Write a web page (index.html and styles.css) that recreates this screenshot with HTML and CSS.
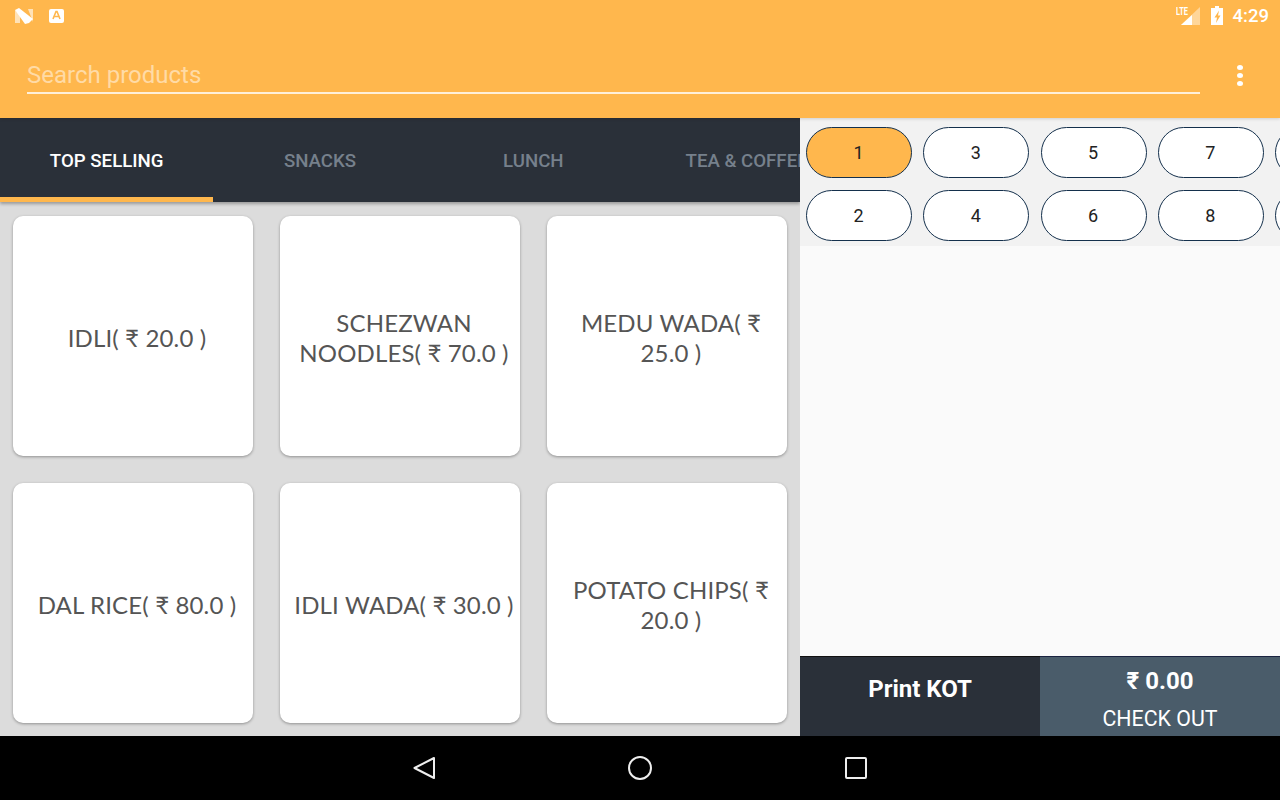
FILE: index.html
```html
<!DOCTYPE html>
<html>
	<head>
		<meta charset="UTF-8">
		<title>Point of sale</title>
		<link rel="stylesheet" href="styles.css">
	</head>
	<body>
		<div class="app">
			<div class="toolbar">
				<div class="status">
					<svg class="ic-n" width="20" height="16" viewBox="0 0 20 16">
						<path d="M1 2 L1 15 L6 15 L6 7 Z" fill="#ffe2b8"/>
						<path d="M14 1 L19 1 L19 14 Z" fill="#ffe2b8"/>
						<path d="M1 2 L5 0 L19 11 L15 15 L11 16 Z" fill="#fff"/>
					</svg>
					<svg class="ic-a" width="15" height="16" viewBox="0 0 15 16">
						<rect x="0" y="1" width="15" height="14" rx="2" fill="#fff"/>
						<path d="M4 11 L7 3.5 L8 3.5 L11 11 M5 8.5 L10 8.5" fill="none" stroke="#ffb74d" stroke-width="1.6"/>
					</svg>
					<div class="status-right">
						<svg width="24" height="20" viewBox="0 0 24 20">
							<text x="0" y="9" class="lte" textLength="12" lengthAdjust="spacingAndGlyphs">LTE</text>
							<path d="M5 19 L24 1 L24 19 Z" fill="#ffd699"/>
							<path d="M5 19 L16 9 L16 19 Z" fill="#fff"/>
						</svg>
						<svg class="ic-batt" width="14" height="20" viewBox="0 0 14 20">
							<path d="M5 0 H9 V2 H13 V19 H1 V2 H5 Z" fill="#fff"/>
							<path d="M9 4.5 L4.5 11.5 H7 L6 17 L10.5 9.5 H8 Z" fill="#ffb74d"/>
						</svg>
						<span class="clock">4:29</span>
					</div>
				</div>
				<div class="search-row">
					<div class="search">Search products</div>
					<div class="kebab"><i></i><i></i><i></i></div>
				</div>
			</div>

			<div class="main">
				<div class="left">
					<ul class="tabs">
						<li class="active">TOP SELLING</li>
						<li>SNACKS</li>
						<li>LUNCH</li>
						<li>TEA &amp; COFFEE</li>
					</ul>
					<div class="products">
						<div class="card">IDLI( ₹ 20.0 )</div>
						<div class="card">SCHEZWAN NOODLES( ₹ 70.0 )</div>
						<div class="card">MEDU WADA( ₹ 25.0 )</div>
						<div class="card">DAL RICE( ₹ 80.0 )</div>
						<div class="card">IDLI WADA( ₹ 30.0 )</div>
						<div class="card">POTATO CHIPS( ₹ 20.0 )</div>
					</div>
				</div>

				<div class="right">
					<div class="tables">
						<div class="pill on">1</div>
						<div class="pill">2</div>
						<div class="pill">3</div>
						<div class="pill">4</div>
						<div class="pill">5</div>
						<div class="pill">6</div>
						<div class="pill">7</div>
						<div class="pill">8</div>
						<div class="pill"></div>
						<div class="pill"></div>
					</div>
					<div class="cart"></div>
					<div class="actions">
						<div class="kot">Print KOT</div>
						<div class="checkout">
							<div class="total">₹ 0.00</div>
							<div class="co-label">CHECK OUT</div>
						</div>
					</div>
				</div>
			</div>

			<div class="navbar">
				<svg width="24" height="24" viewBox="0 0 24 24"><path d="M22 2 L2.5 12 L22 22 Z" fill="none" stroke="#eee" stroke-width="2" stroke-linejoin="round"/></svg>
				<svg width="26" height="26" viewBox="0 0 26 26"><circle cx="13" cy="13" r="11" fill="none" stroke="#eee" stroke-width="2"/></svg>
				<svg width="24" height="24" viewBox="0 0 24 24"><rect x="2" y="2" width="20" height="20" rx="1" fill="none" stroke="#eee" stroke-width="2"/></svg>
			</div>
		</div>
	</body>
</html>
```

FILE: styles.css
```css
* {
	margin: 0;
	padding: 0;
	box-sizing: border-box;
}
ul, li {
	list-style: none;
}
body {
	font-family: Roboto, sans-serif;
	overflow: hidden;
}
.app {
	width: 1280px;
	height: 800px;
	display: flex;
	flex-direction: column;
}

/* top bar */
.toolbar {
	height: 118px;
	background: #ffb74d;
	flex: none;
	position: relative;
	z-index: 2;
	box-shadow: 0 1px 3px rgba(0, 0, 0, .15);
}
.status {
	height: 32px;
	display: flex;
	align-items: center;
	padding-left: 14px;
	padding-right: 11px;
}
.ic-a {
	margin-left: 15px;
}
.status-right {
	margin-left: auto;
	display: flex;
	align-items: center;
}
.lte {
	font-family: Roboto, sans-serif;
	font-size: 10px;
	font-weight: 700;
	fill: #fff;
}
.ic-batt {
	margin-left: 10px;
}
.clock {
	margin-left: 9px;
	color: #fff;
	font-size: 18.5px;
	font-weight: 500;
}
.search-row {
	display: flex;
	align-items: flex-start;
	padding: 26px 0 0 27px;
}
.search {
	width: 1173px;
	height: 36px;
	border-bottom: 2px solid #fff0da;
	color: #ffdba6;
	font-size: 24px;
	line-height: 34px;
}
.kebab {
	margin-left: 37px;
	padding-top: 7px;
	display: flex;
	flex-direction: column;
	gap: 3px;
}
.kebab i {
	display: block;
	width: 6px;
	height: 5px;
	border-radius: 50%;
	background: #fff;
}

.main {
	flex: 1;
	display: flex;
	min-height: 0;
}

/* products */
.left {
	width: 800px;
	background: #dcdcdc;
	overflow: hidden;
}
.tabs {
	height: 84px;
	display: flex;
	background: #2a3039;
	box-shadow: 0 2px 3px rgba(0, 0, 0, .3);
	position: relative;
}
.tabs li {
	flex: none;
	width: 213.33px;
	line-height: 86px;
	text-align: center;
	white-space: nowrap;
	font-size: 18.67px;
	font-weight: 500;
	color: #76808c;
}
.tabs li.active {
	color: #fff;
	border-bottom: 5px solid #ffb74d;
}
.products {
	display: grid;
	grid-template-columns: repeat(3, 240px);
	grid-auto-rows: 240px;
	gap: 27px;
	padding: 14px 13px;
}
.card {
	background: #fff;
	border-radius: 10px;
	box-shadow: 0 1px 3px rgba(0, 0, 0, .35);
	display: flex;
	align-items: center;
	justify-content: center;
	text-align: center;
	padding: 4px 0 0 8px;
	color: #555;
	font-family: Lato, sans-serif;
	font-size: 24px;
	letter-spacing: .15px;
	line-height: 30px;
}

/* tables and cart */
.right {
	width: 480px;
	background: #fafafa;
	display: flex;
	flex-direction: column;
	overflow: hidden;
}
.tables {
	height: 128px;
	flex: none;
	background: #f2f2f2;
	padding: 9px 6px;
	display: grid;
	grid-template-columns: repeat(5, 106px);
	grid-template-rows: repeat(2, 51px);
	grid-auto-flow: column;
	gap: 12px 11.3px;
}
.pill {
	background: #fff;
	border: 1px solid #14304c;
	border-radius: 26px;
	display: flex;
	align-items: center;
	justify-content: center;
	padding-right: 1px;
	font-size: 18px;
	color: #222;
}
.pill.on {
	background: #ffb74d;
}
.cart {
	flex: 1;
}
.actions {
	height: 80px;
	flex: none;
	display: flex;
	color: #fff;
}
.kot {
	width: 240px;
	background: #2a3039;
	border-top: 1px solid #111;
	text-align: center;
	font-size: 24px;
	font-weight: 700;
	line-height: 64px;
}
.checkout {
	width: 240px;
	background: #4a5c6a;
	border-top: 1px solid #1a2340;
	text-align: center;
}
.total {
	font-size: 24px;
	font-weight: 700;
	line-height: 48px;
}
.co-label {
	font-size: 21.33px;
	line-height: 30px;
	margin-top: -1px;
}

/* android buttons */
.navbar {
	height: 64px;
	flex: none;
	background: #000;
	display: flex;
	align-items: center;
	justify-content: center;
	gap: 191px;
}
```
